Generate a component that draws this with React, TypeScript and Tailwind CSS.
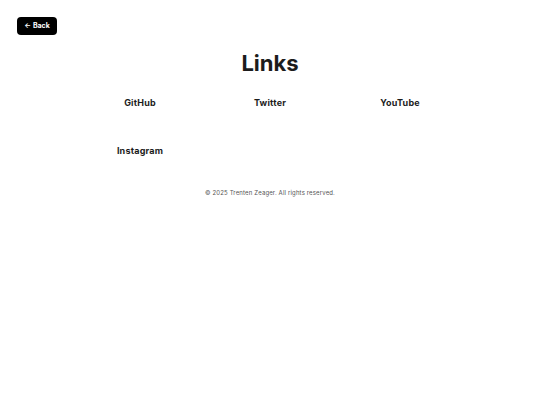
import React from 'react';

const links = [
  { name: 'GitHub', href: '#' },
  { name: 'Twitter', href: '#' },
  { name: 'YouTube', href: '#' },
  { name: 'Instagram', href: '#' },
];

const App = () => {
  return (
    <div className="min-h-screen bg-white text-[#1c1c1c]" style={{ fontFamily: 'Inter, "Noto Sans", sans-serif' }}>
      <header className="px-[17px] pt-[17px]">
        <button className="h-[18px] w-[40px] rounded-[4px] bg-black text-[7px] font-bold text-white flex items-center justify-center gap-[2px]">
          <span>←</span>
          <span>Back</span>
        </button>
      </header>

      <main className="flex flex-col items-center">
        <h1 className="mt-[12px] text-[22px] font-bold leading-[33px]">Links</h1>

        <div className="mt-[17px] grid w-[390px] grid-cols-3 gap-y-[36px]">
          {links.map((link) => (
            <a
              key={link.name}
              href={link.href}
              className="flex h-[12px] items-center justify-center text-[9px] font-bold tracking-[0.2px]"
            >
              {link.name}
            </a>
          ))}
        </div>
      </main>

      <footer className="mt-[32px] text-center text-[6px] leading-[8px] tracking-[0.15px] text-[#555]">
        © 2025 Trenten Zeager. All rights reserved.
      </footer>
    </div>
  );
};

export default App;
